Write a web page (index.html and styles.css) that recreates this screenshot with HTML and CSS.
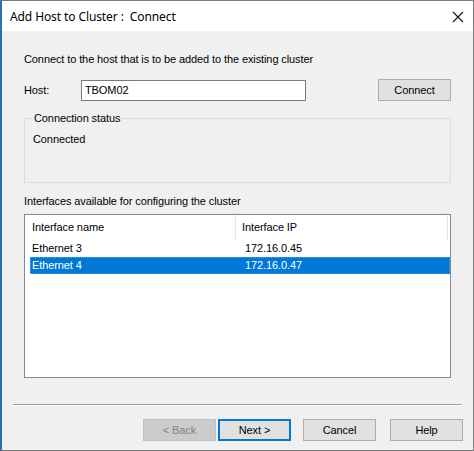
FILE: index.html
```html
<!DOCTYPE html>
<html>
<head>
<meta charset="utf-8">
<link rel="stylesheet" href="styles.css">
</head>
<body>
<div class="frame">
  <div class="titlebar">
    <span class="title">Add Host to Cluster :&nbsp; Connect</span>
    <svg class="close" width="12" height="12" viewBox="0 0 12 12"><path d="M1 1 L11 11 M11 1 L1 11" stroke="#111" stroke-width="1.1" fill="none"/></svg>
  </div>
  <div class="content">
    <div class="intro">Connect to the host that is to be added to the existing cluster</div>
    <div class="hostrow">
      <span class="hostlabel">Host:</span>
      <div class="textbox">TBOM02</div>
      <div class="btn connect">Connect</div>
    </div>
    <div class="group">
      <span class="legend">Connection status</span>
      <div class="status">Connected</div>
    </div>
    <div class="ifaces">Interfaces available for configuring the cluster</div>
    <div class="listbox">
      <div class="header">
        <div class="col c1">Interface name</div>
        <div class="col c2">Interface IP</div>
        <div class="col c3"></div>
      </div>
      <div class="row">
        <div class="cell c1">Ethernet 3</div>
        <div class="cell c2">172.16.0.45</div>
      </div>
      <div class="row sel">
        <div class="cell c1">Ethernet 4</div>
        <div class="cell c2">172.16.0.47</div>
      </div>
    </div>
  </div>
  <div class="sep"></div>
  <div class="buttons">
    <div class="btn disabled">&lt; Back</div>
    <div class="btn default">Next &gt;</div>
    <div class="btn">Cancel</div>
    <div class="btn help">Help</div>
  </div>
</div>
</body>
</html>
```
FILE: styles.css
```css
html, body { margin: 0; padding: 0; background: #f0f0f0; }
body { font-family: "Liberation Sans", Arial, sans-serif; font-size: 11px; color: #000; letter-spacing: -0.1px; }
.frame {
  width: 474px; height: 451px; box-sizing: border-box;
  border: 1px solid #7a7a7a; border-left: 2px solid #2f6fb3;
  background: #f0f0f0; display: flex; flex-direction: column;
}
.titlebar {
  height: 30px; background: #fff; display: flex; align-items: center;
  justify-content: space-between; padding: 0 9px 0 8px; flex: none;
}
.title { font-family: "Noto Sans", "Open Sans", sans-serif; font-size: 12px; color: #000; letter-spacing: -0.1px; }
.close { display: block; margin-top: 1px; }
.content { padding: 22px 22px 0 22px; }
.intro { line-height: 13px; height: 13px; }
.hostrow { display: flex; align-items: center; margin-top: 13px; height: 22px; }
.hostlabel { width: 57px; }
.textbox {
  width: 220px; height: 19px; box-sizing: content-box; background: #fff;
  border: 1px solid #7a7a7a; line-height: 19px; padding-left: 3px;
}
.btn {
  width: 73px; height: 22px; box-sizing: border-box; background: #e1e1e1;
  border: 1px solid #adadad; display: flex; align-items: center; justify-content: center;
}
.connect { margin-left: auto; }
.group {
  position: relative; margin-top: 17px; height: 65px; box-sizing: border-box;
  border: 1px solid #dcdcdc;
}
.legend {
  position: absolute; left: 7px; top: -7px; background: #f0f0f0; padding: 0 2px; line-height: 13px;
}
.status { margin: 14px 0 0 8px; line-height: 13px; }
.ifaces { margin-top: 12px; line-height: 13px; }
.listbox {
  margin-top: 6px; height: 164px; box-sizing: border-box; background: #fff;
  border: 1px solid #828790; padding: 0 0 0 5px;
}
.header { display: flex; height: 25px; }
.col { line-height: 25px; box-sizing: border-box; padding-left: 2px; }
.header .c1 { width: 207px; border-right: 1px solid #e5e5e5; }
.header .c2 { width: 213px; padding-left: 6px; border-right: 1px solid #e5e5e5; }
.header .c3 { flex: 1; }
.row { display: flex; height: 17px; line-height: 17px; width: 420px; box-sizing: border-box; }
.row .c1 { width: 207px; padding-left: 2px; }
.row .c2 { padding-left: 6px; }
.row.sel { background: #0078d7; color: #fff; outline: 1px dotted #5a9fe0; outline-offset: -1px; }
.sep {
  margin: 26px 11px 0 11px; height: 1px; background: #a0a0a0; border-bottom: 1px solid #fff;
}
.buttons { display: flex; justify-content: flex-end; gap: 2px; margin-top: 13px; padding-right: 10px; }
.btn.disabled { background: #cccccc; border-color: #bfbfbf; color: #838383; }
.btn.default { border: 2px solid #0078d7; }
.buttons .btn:nth-child(3) { margin-left: 10px; }
.buttons .btn.help { margin-left: 12px; }
```
